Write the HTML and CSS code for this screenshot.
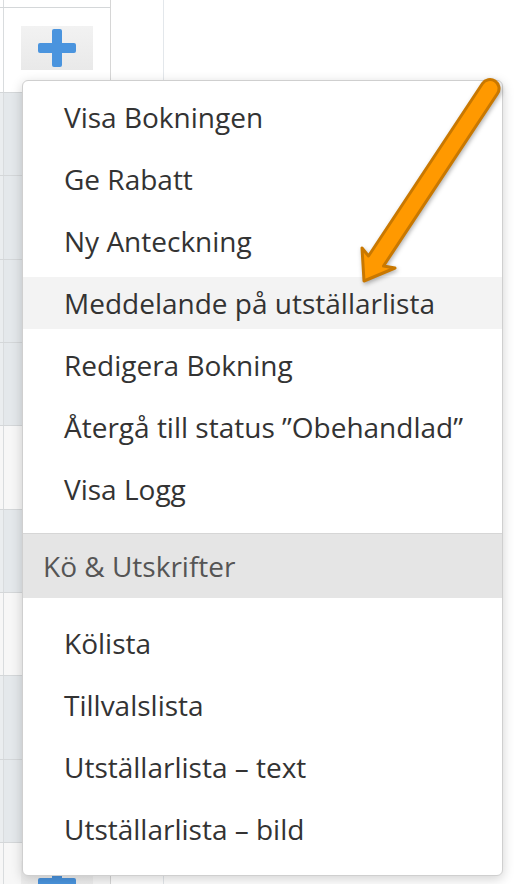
FILE: index.html
```html
<!DOCTYPE html>
<html lang="sv">
<head>
<meta charset="utf-8">
<title>Bokning meny</title>
<link rel="stylesheet" href="styles.css">
</head>
<body>
<div class="page">
  <div class="col col-a">
    <div class="row row-top"><div class="stub"></div><div class="cell"></div></div>
    <div class="row row-first free"><div class="stub"></div><div class="cell"><div class="add-btn"><svg class="plus" viewBox="0 0 38 38" width="38" height="38"><rect x="0" y="14" width="38" height="10" rx="2"/><rect x="14" y="0" width="10" height="38" rx="2"/></svg></div></div></div>
    <div class="row booked"><div class="stub"></div><div class="cell"></div></div>
    <div class="row booked"><div class="stub"></div><div class="cell"></div></div>
    <div class="row booked"><div class="stub"></div><div class="cell"></div></div>
    <div class="row booked"><div class="stub"></div><div class="cell"></div></div>
    <div class="row free"><div class="stub"></div><div class="cell"></div></div>
    <div class="row booked"><div class="stub"></div><div class="cell"></div></div>
    <div class="row free"><div class="stub"></div><div class="cell"></div></div>
    <div class="row booked"><div class="stub"></div><div class="cell"></div></div>
    <div class="row booked"><div class="stub"></div><div class="cell"></div></div>
    <div class="row free"><div class="stub"></div><div class="cell"><div class="add-btn"><svg class="plus" viewBox="0 0 38 38" width="38" height="38"><rect x="0" y="14" width="38" height="10" rx="2"/><rect x="14" y="0" width="10" height="38" rx="2"/></svg></div></div></div>
  </div>
  <div class="col col-b"></div>
  <div class="col col-c"></div>
</div>

<ul class="dropdown">
  <li><a class="item">Visa Bokningen</a></li>
  <li><a class="item">Ge Rabatt</a></li>
  <li><a class="item">Ny Anteckning</a></li>
  <li><a class="item active">Meddelande på utställarlista</a></li>
  <li><a class="item">Redigera Bokning</a></li>
  <li><a class="item">Återgå till status ”Obehandlad”</a></li>
  <li><a class="item">Visa Logg</a></li>
  <li class="header">Kö &amp; Utskrifter</li>
  <li><a class="item">Kölista</a></li>
  <li><a class="item">Tillvalslista</a></li>
  <li><a class="item">Utställarlista – text</a></li>
  <li><a class="item">Utställarlista – bild</a></li>
</ul>

<svg class="arrow" width="526" height="884" viewBox="0 0 526 884">
  <path d="M 482.5 83.5 L 368.5 256 L 362 248 L 364 281 L 395 268 L 383.5 266 L 497.5 93.5 A 9 9 0 0 0 482.5 83.5 Z"/>
</svg>
</body>
</html>
```

FILE: styles.css
```css
html, body {
  margin: 0;
  padding: 0;
  background: #ffffff;
}

body {
  width: 526px;
  height: 884px;
  overflow: hidden;
  position: relative;
  font-family: "Open Sans", "Noto Sans", sans-serif;
}

.page {
  display: flex;
  height: 884px;
}

.col {
  height: 100%;
}

.col-a {
  width: 110px;
  border-right: 1px solid #d6d6d6;
  display: flex;
  flex-direction: column;
}

.col-b {
  width: 52px;
  border-right: 1px solid #e3e7eb;
}

.col-c {
  flex: 1;
}

.row {
  display: flex;
  box-sizing: border-box;
  border-bottom: 1px solid #d4d7d9;
  height: 83.333px;
  flex: none;
}

.row-top {
  height: 8px;
}

.row-first {
  height: 85px;
}

.stub {
  width: 3px;
  border-right: 1px solid #d9dcde;
  flex: none;
}

.cell {
  flex: 1;
}

.booked .stub {
  background: #eaedef;
}

.booked .cell {
  background: #e4e8eb;
}

.free .stub,
.free .cell {
  background: #f7f7f7;
}

.row-first .stub,
.row-first .cell,
.row-top .stub,
.row-top .cell {
  background: #ffffff;
}

.free .cell {
  padding: 18px 0 0 17px;
  box-sizing: border-box;
}

.add-btn {
  width: 72px;
  height: 44px;
  background: linear-gradient(#f2f2f2, #e9e9e9);
  display: flex;
  align-items: center;
  justify-content: center;
}

.plus {
  fill: #4a94de;
  display: block;
}

.dropdown {
  position: absolute;
  left: 22px;
  top: 80px;
  width: 481px;
  box-sizing: border-box;
  margin: 0;
  padding: 5px 0 15px;
  list-style: none;
  background: #ffffff;
  border: 1px solid #cfcfcf;
  border-radius: 6px;
  box-shadow: 0 3px 12px rgba(0, 0, 0, 0.18);
}

.dropdown li {
  padding: 5px 0;
}

.item {
  display: block;
  height: 52px;
  line-height: 52px;
  padding-left: 41px;
  font-size: 28px;
  color: #333333;
  white-space: nowrap;
}

.item.active {
  background: #f3f3f3;
}

.dropdown li.header {
  margin: 13px 0 14px;
  padding: 0 0 0 20px;
  height: 64px;
  line-height: 64px;
  border-top: 1px solid #d6d6d6;
  background: #e5e5e5;
  font-size: 28px;
  color: #555555;
}

.arrow {
  position: absolute;
  left: 0;
  top: 0;
  pointer-events: none;
  filter: drop-shadow(1px 2px 2px rgba(0, 0, 0, 0.3));
}

.arrow path {
  fill: #ff9900;
  stroke: #c97800;
  stroke-width: 3;
  stroke-linejoin: round;
}
```
